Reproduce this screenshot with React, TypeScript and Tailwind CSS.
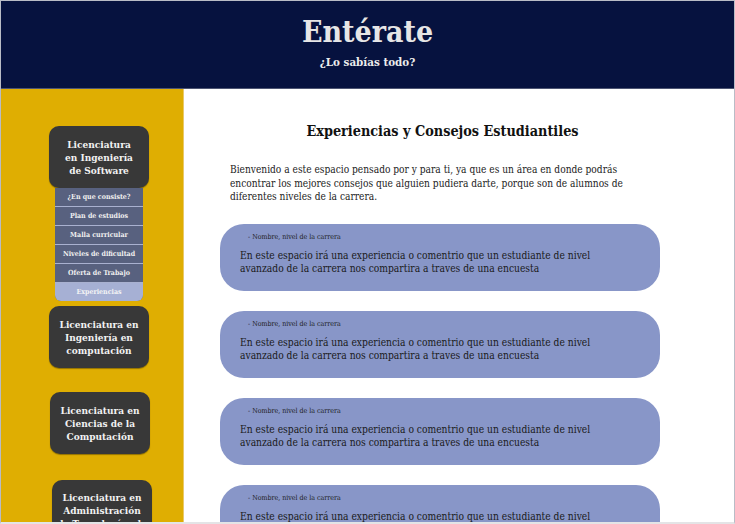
const serif = 'font-["DejaVu_Serif_Condensed","DejaVu_Serif",serif]';

const carreras = [
  { lines: ['Licenciatura', 'en Ingeniería', 'de Software'], className: 'mt-[37px] ml-[48px]' },
  { lines: ['Licenciatura en', 'Ingeniería en', 'computación'], className: 'mt-[5px] ml-[48px]' },
  { lines: ['Licenciatura en', 'Ciencias de la', 'Computación'], className: 'mt-[24px] ml-[49px]' },
  { lines: ['Licenciatura en', 'Administración', 'de Tecnologías de', 'la Información'], className: 'mt-[26px] ml-[51px]' },
];

const submenu = ['¿En que consiste?', 'Plan de estudios', 'Malla curricular', 'Niveles de dificultad', 'Oferta de Trabajo'];

function CarreraCard({ lines, className }: { lines: string[]; className: string }) {
  return (
    <div className={`${className} w-[100px] min-h-[62px] shrink-0 rounded-[10px] bg-[#383838] shadow-[0_1px_1px_rgba(0,0,0,0.35)] flex flex-col items-center justify-center py-[11px] text-center text-[10px] leading-[13px] font-bold text-[#f2f2f2]`}>
      {lines.map((l) => (
        <span key={l} className="whitespace-nowrap">{l}</span>
      ))}
    </div>
  );
}

function Experiencia() {
  return (
    <div className="w-[440px] h-[67px] shrink-0 rounded-[24px] bg-[#8896c8] pt-[8px]">
      <p className="pl-[28px] text-[7px] leading-[10px] text-[#1c1c1c]">- Nombre, nivel de la carrera</p>
      <p className="pl-[20px] mt-[7px] text-[10.2px] leading-[13px] text-[#1a1a1a] whitespace-nowrap">
        En este espacio irá una experiencia o comentrio que un estudiante de nivel
        <br />
        avanzado de la carrera nos compartira a traves de una encuesta
      </p>
    </div>
  );
}

export default function App() {
  return (
    <div className={`${serif} w-[735px] h-[524px] overflow-hidden flex flex-col border-t border-l border-r border-b-2 border-[#b9bcc6] border-b-[#e4e4e6] bg-white`}>
      {/* Header */}
      <header className="h-[88px] shrink-0 bg-[#06123f] border-b border-[#4d5573] flex flex-col items-center">
        <h1 className="mt-[14px] text-[30px] leading-[34px] font-bold text-[#e6e6e6]">Entérate</h1>
        <p className="mt-[6px] text-[11.5px] leading-[14px] font-bold text-[#ececec]">¿Lo sabías todo?</p>
      </header>

      <div className="flex flex-1 min-h-0">
        {/* Sidebar */}
        <aside className="w-[183px] shrink-0 bg-[#dfae02] border-r border-[#e9c96a] flex flex-col overflow-hidden">
          <CarreraCard {...carreras[0]} />
          <div className="ml-[54px] w-[88px] shrink-0 bg-[#58617f] rounded-b-[6px] overflow-hidden">
            {submenu.map((item) => (
              <div key={item} className="h-[19px] flex items-center justify-center border-b border-[#a9b1d0] text-[7px] font-bold text-[#f0f0f0] whitespace-nowrap">
                {item}
              </div>
            ))}
            <div className="h-[18px] flex items-center justify-center bg-[#a6b0d4] text-[7px] font-bold text-[#f4f4f4]">
              Experiencias
            </div>
          </div>
          {carreras.slice(1).map((c) => (
            <CarreraCard key={c.lines[1]} {...c} />
          ))}
        </aside>

        {/* Main */}
        <main className="flex-1 min-w-0 overflow-hidden">
          <div className="ml-[36px] w-[445px] flex flex-col">
            <h2 className="mt-[33px] text-center text-[14.3px] leading-[18px] font-bold text-[#111111]">
              Experiencias y Consejos Estudiantiles
            </h2>
            <p className="mt-[23px] pl-[10px] text-[10.1px] leading-[13.5px] text-[#222222] whitespace-nowrap">
              Bienvenido a este espacio pensado por y para ti, ya que es un área en donde podrás
              <br />
              encontrar los mejores consejos que alguien pudiera darte, porque son de alumnos de
              <br />
              diferentes niveles de la carrera.
            </p>
            <div className="mt-[20px] flex flex-col gap-[20px]">
              <Experiencia />
              <Experiencia />
              <Experiencia />
              <Experiencia />
            </div>
          </div>
        </main>
      </div>
    </div>
  );
}
